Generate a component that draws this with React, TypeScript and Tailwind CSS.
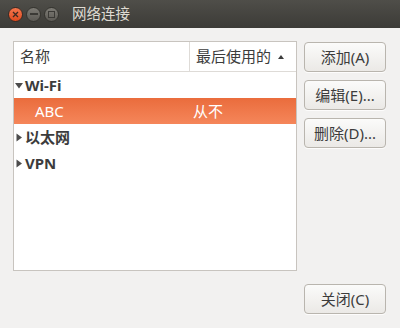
import React from "react";

const font = { fontFamily: '"Noto Sans", "Noto Sans CJK SC", sans-serif' };

function TitleBar() {
  return (
    <div className="flex h-[28px] items-center bg-gradient-to-b from-[#4f4e49] to-[#3c3b37] pl-[8px]">
      <div className="flex h-[15px] w-[15px] items-center justify-center rounded-full border border-[#3a2a24] bg-gradient-to-b from-[#f5764c] to-[#df4a1c]">
        <svg width="7" height="7" viewBox="0 0 7 7">
          <path d="M1 1 L6 6 M6 1 L1 6" stroke="#3c2a22" strokeWidth="1.3" />
        </svg>
      </div>
      <div className="ml-[3px] flex h-[15px] w-[15px] items-center justify-center rounded-full border border-[#35342f] bg-gradient-to-b from-[#7d7b75] to-[#5c5a55]">
        <div className="h-[1.5px] w-[8px] bg-[#3b3a36]" />
      </div>
      <div className="ml-[3px] flex h-[15px] w-[15px] items-center justify-center rounded-full border border-[#35342f] bg-gradient-to-b from-[#7d7b75] to-[#5c5a55]">
        <div className="h-[7px] w-[7px] border-[1.3px] border-[#3b3a36]" />
      </div>
      <span className="ml-[13px] text-[14.5px] text-[#dfdbd2]">网络连接</span>
    </div>
  );
}

function Expander({ open }: { open: boolean }) {
  return (
    <svg width="8" height="9" viewBox="0 0 8 9" className="mr-[2px] shrink-0">
      {open ? <path d="M0 2 L8 2 L4 7.5 Z" fill="#4c4c4c" /> : <path d="M1.5 0.5 L7 4.5 L1.5 8.5 Z" fill="#4c4c4c" />}
    </svg>
  );
}

function Btn({ label, className = "" }: { label: string; className?: string }) {
  return (
    <button className={`h-[30px] w-[82px] rounded-[4px] border border-[#b9b5ae] bg-gradient-to-b from-[#fbfbfa] to-[#ebe9e6] text-[15px] text-[#3c3c3c] shadow-[0_1px_0_rgba(255,255,255,0.8)] ${className}`}>
      {label}
    </button>
  );
}

export default function App() {
  return (
    <div className="flex h-[328px] w-[400px] flex-col bg-[#f2f1f0]" style={font}>
      <TitleBar />
      <div className="flex flex-1 flex-col px-[13px] pt-[13px]">
        <div className="flex gap-[7px]">
          <div className="flex h-[230px] w-[284px] flex-col border border-[#c8c4bf] bg-white">
            <div className="flex h-[30px] border-b border-[#dedbd7] text-[15px] text-[#3c3c3c]">
              <div className="flex w-[176px] items-center border-r border-[#dedbd7] pl-[6px]">名称</div>
              <div className="flex flex-1 items-center pl-[6px]">
                最后使用的
                <svg width="6" height="4" viewBox="0 0 6 4" className="ml-[7px]">
                  <path d="M0 4 L3 0 L6 4 Z" fill="#3c3c3c" />
                </svg>
              </div>
            </div>
            <div className="flex h-[26px] items-center pl-[1px] text-[15px] font-bold text-[#3c3c3c]">
              <Expander open />
              Wi-Fi
            </div>
            <div className="flex h-[26px] items-center bg-gradient-to-b from-[#ea6c3c] to-[#f5865a] text-[15px] text-white">
              <span className="w-[176px] pl-[21px]">ABC</span>
              <span className="pl-[3px]">从不</span>
            </div>
            <div className="flex h-[27px] items-center pl-[1px] text-[15px] font-bold text-[#3c3c3c]">
              <Expander open={false} />
              以太网
            </div>
            <div className="flex h-[24px] items-center pl-[1px] text-[15px] font-bold text-[#3c3c3c]">
              <Expander open={false} />
              VPN
            </div>
          </div>
          <div className="flex flex-col gap-[8px] pt-[1px]">
            <Btn label="添加(A)" />
            <Btn label="编辑(E)..." />
            <Btn label="删除(D)..." />
          </div>
        </div>
        <div className="mt-[13px] flex justify-end pr-[1px]">
          <Btn label="关闭(C)" className="h-[29px]" />
        </div>
      </div>
    </div>
  );
}
